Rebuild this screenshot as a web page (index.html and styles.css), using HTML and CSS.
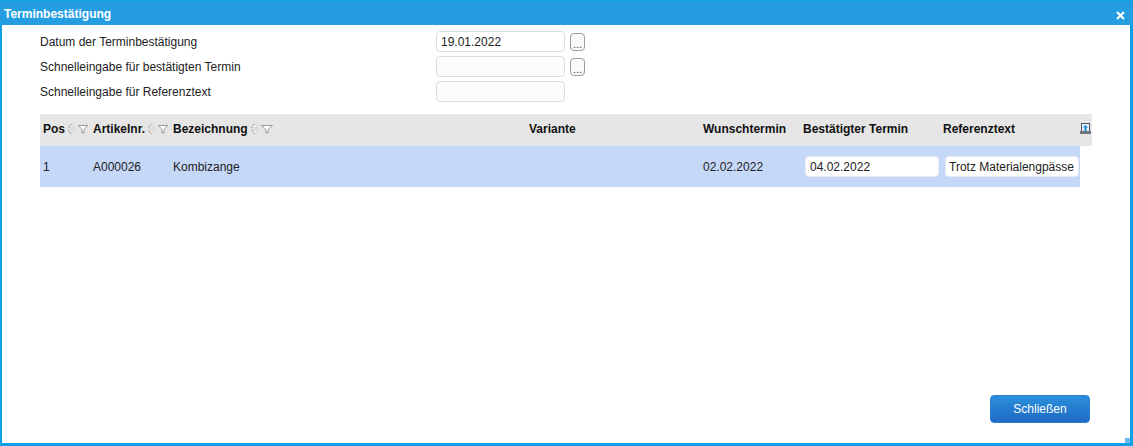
FILE: index.html
```html
<!DOCTYPE html>
<html lang="de">
<head>
<meta charset="utf-8">
<title>Terminbestätigung</title>
<link rel="stylesheet" href="styles.css">
</head>
<body>
<div class="dialog">
  <div class="titlebar">
    <span class="title">Terminbestätigung</span>
    <svg class="close" width="9" height="9" viewBox="0 0 9 9"><path d="M1 1l7 7M8 1l-7 7" stroke="#fff" stroke-width="2.2"/></svg>
  </div>
  <div class="content">
    <div class="form">
      <label class="label">Datum der Terminbestätigung</label>
      <input class="field" type="text" value="19.01.2022">
      <button class="pick">...</button>
      <label class="label">Schnelleingabe für bestätigten Termin</label>
      <input class="field empty" type="text">
      <button class="pick">...</button>
      <label class="label">Schnelleingabe für Referenztext</label>
      <input class="field empty" type="text">
    </div>
    <div class="table">
      <div class="thead">
        <div class="th">Pos<svg class="sort" width="9" height="12" viewBox="0 0 9 12"><path d="M4.5 .8L1 4.8h7zM4.5 11.2L1 7.2h7z" fill="#f4f4f4" stroke="#cfcfcf"/><path d="M4.5 1L1.5 4.5M4.5 11L1.5 7.5" stroke="#a8a8a8" fill="none"/></svg><svg class="filter" width="10" height="9" viewBox="0 0 10 9"><path d="M.5.5h9L6 4.5V8H4V4.5z" fill="#fff" stroke="#999"/></svg></div>
        <div class="th">Artikelnr.<svg class="sort" width="9" height="12" viewBox="0 0 9 12"><path d="M4.5 .8L1 4.8h7zM4.5 11.2L1 7.2h7z" fill="#f4f4f4" stroke="#cfcfcf"/><path d="M4.5 1L1.5 4.5M4.5 11L1.5 7.5" stroke="#a8a8a8" fill="none"/></svg><svg class="filter" width="10" height="9" viewBox="0 0 10 9"><path d="M.5.5h9L6 4.5V8H4V4.5z" fill="#fff" stroke="#999"/></svg></div>
        <div class="th">Bezeichnung<svg class="sort" width="9" height="12" viewBox="0 0 9 12"><path d="M4.5 .8L1 4.8h7zM4.5 11.2L1 7.2h7z" fill="#f4f4f4" stroke="#cfcfcf"/><path d="M4.5 1L1.5 4.5M4.5 11L1.5 7.5" stroke="#a8a8a8" fill="none"/></svg><svg class="filter" width="12" height="9" viewBox="0 0 12 9"><path d="M.5.5h11L7 4.5V8H5V4.5z" fill="#fff" stroke="#999"/></svg></div>
        <div class="th">Variante</div>
        <div class="th">Wunschtermin</div>
        <div class="th">Bestätigter Termin</div>
        <div class="th">Referenztext</div>
        <div class="th-icon"><svg width="11" height="11" viewBox="0 0 11 11"><rect x="1" y="0" width="9" height="9" fill="#4a5560"/><rect x="2" y="1" width="7" height="7" fill="#e4eef8"/><path d="M5.5 2L8 4.5H6.5V8h-2V4.5H3z" fill="#1e8ad6"/><rect x="0" y="8" width="11" height="3" fill="#70767e"/></svg></div>
      </div>
      <div class="row">
        <div class="cell">1</div>
        <div class="cell">A000026</div>
        <div class="cell">Kombizange</div>
        <div class="cell"></div>
        <div class="cell">02.02.2022</div>
        <div class="cell"><input class="cell-input" type="text" value="04.02.2022"></div>
        <div class="cell"><input class="cell-input ref" type="text" value="Trotz Materialengpässe"></div>
      </div>
    </div>
    <div class="footer"><button class="close-btn">Schließen</button></div>
  </div>
  <div class="grip"></div>
</div>
</body>
</html>
```
FILE: styles.css
```css
* { box-sizing: border-box; }
html, body { margin: 0; padding: 0; }
body {
  width: 1133px;
  height: 446px;
  overflow: hidden;
  font-family: "Liberation Sans", Arial, sans-serif;
  font-size: 12px;
  color: #222;
  background: #fff;
}
.dialog {
  position: relative;
  display: flex;
  flex-direction: column;
  width: 1133px;
  height: 446px;
  border-style: solid;
  border-color: #0ea0e6;
  border-width: 0 3px 3px 2px;
}
.titlebar {
  display: flex;
  align-items: center;
  justify-content: space-between;
  flex: 0 0 25px;
  margin: 0 -3px 0 -2px;
  padding: 2px 8px 0 4px;
  background: #259de1;
  border-top: 1px solid #0ea0e6;
}
.title {
  font-size: 12px;
  font-weight: bold;
  color: #fff;
}
.close { margin-top: 3px; }
.content {
  flex: 1;
  display: flex;
  flex-direction: column;
  padding: 6px 0 20px 38px;
}
.form {
  display: grid;
  grid-template-columns: 396px 129px 20px;
  grid-auto-rows: 21px;
  row-gap: 4px;
  align-items: center;
  width: 560px;
}
.label {
  grid-column: 1;
  font-size: 12px;
  color: #222;
}
.field {
  grid-column: 2;
  width: 129px;
  height: 21px;
  padding: 0 4px;
  border: 1px solid #dcdcdc;
  border-radius: 4px;
  background: #fff;
  font: 12px "Liberation Sans", Arial, sans-serif;
  color: #222;
  outline: none;
}
.field.empty { background: #fcfcfc; }
.pick {
  grid-column: 3;
  justify-self: end;
  width: 15px;
  height: 18px;
  padding: 4px 0 0;
  border: 1px solid #9c9c9c;
  border-radius: 4px;
  background: #fafafa;
  font: 11px "Liberation Sans", Arial, sans-serif;
  color: #444;
  line-height: 10px;
}
.table {
  margin-top: 12px;
  width: 1052px;
}
.thead {
  display: grid;
  grid-template-columns: 50px 80px 356px 174px 100px 140px 137px 15px;
  height: 32px;
  background: #e6e6e6;
  align-items: center;
}
.th {
  display: flex;
  align-items: center;
  padding-left: 3px;
  padding-bottom: 2px;
  font-weight: bold;
  font-size: 12px;
  color: #111;
  white-space: nowrap;
}
.th-icon {
  display: flex;
  padding-bottom: 3px;
  justify-content: flex-end;
  padding-right: 1px;
}
.sort { margin-left: 2px; flex: none; }
.filter { margin-left: 2px; flex: none; }
.row {
  display: grid;
  width: 1040px;
  height: 41px;
  background: #c6d8f8;
  grid-template-columns: 50px 80px 356px 174px 100px 140px 140px;
  align-items: center;
}
.cell {
  padding-left: 3px;
  color: #222;
  font-size: 12px;
  min-width: 0;
}
.cell-input {
  display: block;
  width: 134px;
  height: 21px;
  margin-left: 2px;
  padding: 0 4px;
  border: 1px solid #e4ebf6;
  border-radius: 4px;
  background: #fff;
  font: 12px "Liberation Sans", Arial, sans-serif;
  color: #222;
  outline: none;
}
.cell-input.ref { padding: 0 3px; }
.footer {
  margin-top: auto;
  display: flex;
  justify-content: flex-end;
  padding-right: 40px;
}
.close-btn {
  width: 100px;
  height: 28px;
  border: 1px solid #2a7fce;
  border-radius: 4px;
  background: linear-gradient(#2a90dc, #1f6ac4);
  color: #fff;
  font: 12px "Liberation Sans", Arial, sans-serif;
}
.grip {
  position: absolute;
  right: 0;
  bottom: 0;
  width: 5px;
  height: 5px;
  background: #6cb9ee;
}
```
